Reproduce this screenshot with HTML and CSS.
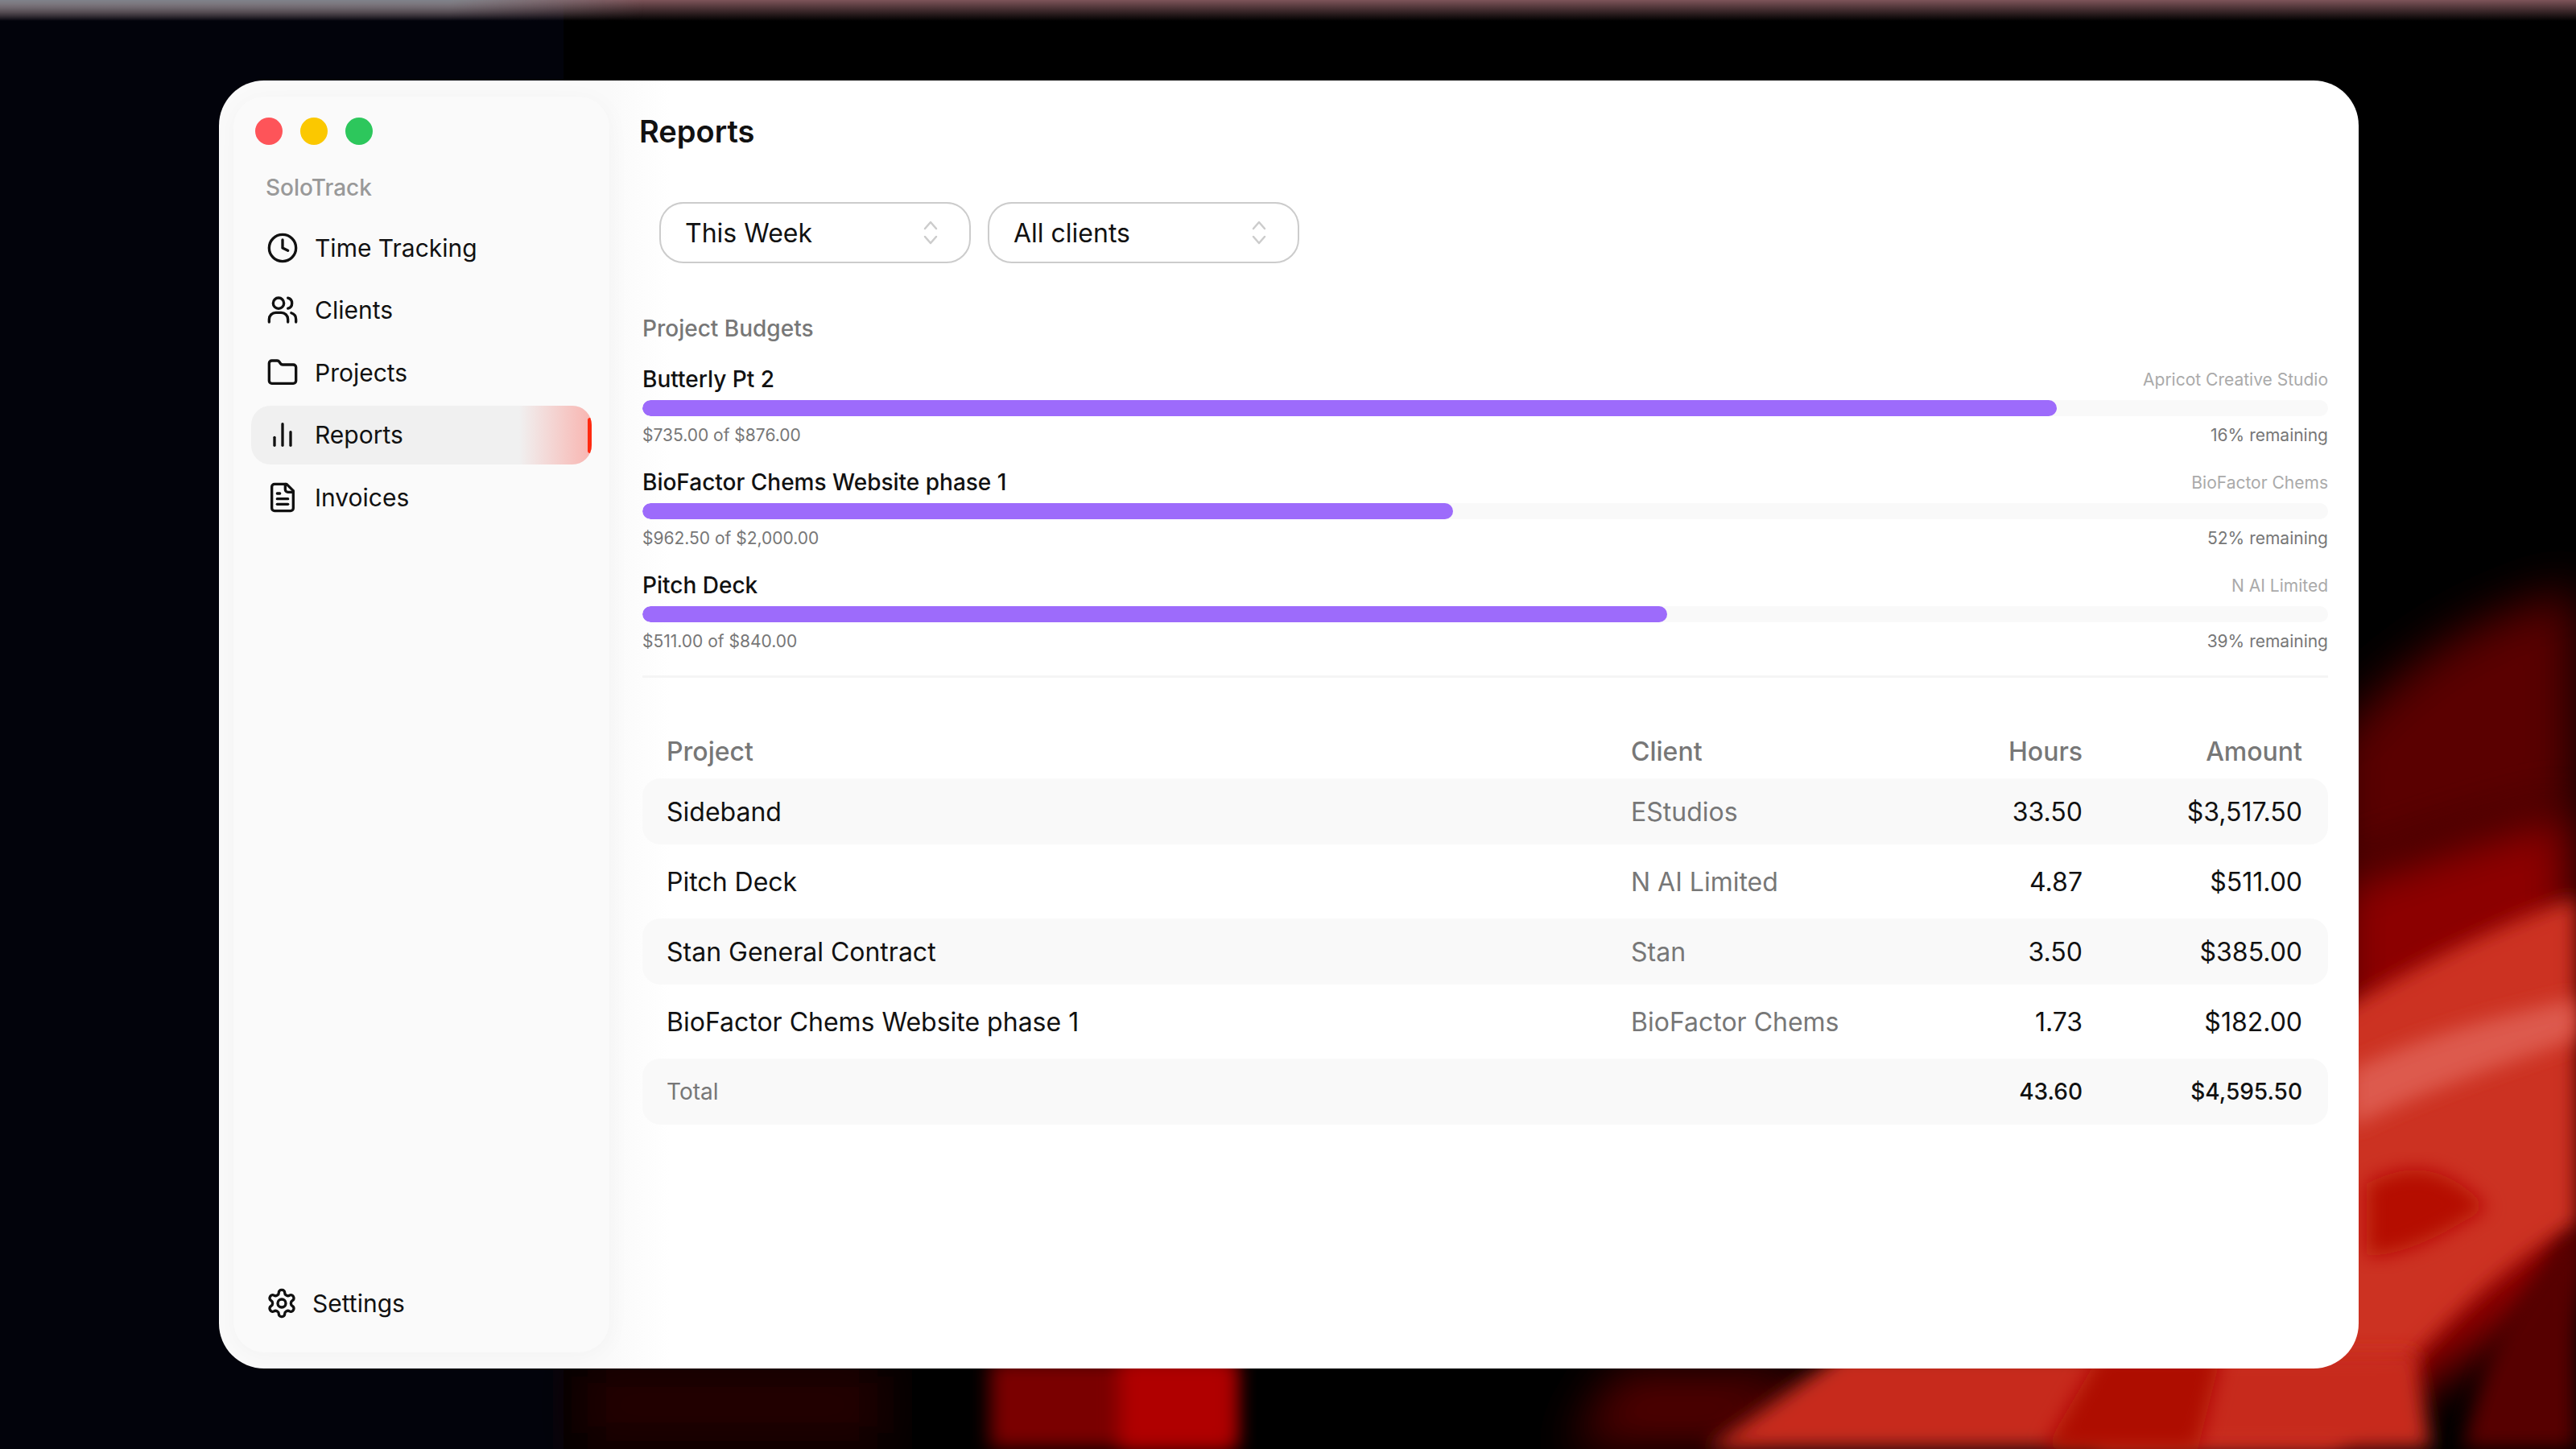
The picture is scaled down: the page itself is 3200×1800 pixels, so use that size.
FILE: index.html
```html
<!DOCTYPE html>
<html>
  <head>
    <title>SoloTrack - Reports</title>
    <link rel="stylesheet" href="styles.css">
  </head>
  <body>
    <svg class="wallpaper" viewBox="0 0 3200 1800" preserveAspectRatio="none">
      <defs>
        <filter id="blur-a" x="-20%" y="-20%" width="140%" height="140%"><feGaussianBlur stdDeviation="30"/></filter>
        <filter id="blur-b" x="-20%" y="-20%" width="140%" height="140%"><feGaussianBlur stdDeviation="12"/></filter>
        <linearGradient id="top-glow" x1="0" y1="0" x2="0" y2="1">
          <stop offset="0" stop-color="#7d5459"/>
          <stop offset="1" stop-color="#7d5459" stop-opacity="0"/>
        </linearGradient>
        <linearGradient id="top-grey" x1="0" y1="0" x2="1" y2="0">
          <stop offset="0" stop-color="#80838a"/>
          <stop offset="0.7" stop-color="#80838a"/>
          <stop offset="1" stop-color="#80838a" stop-opacity="0"/>
        </linearGradient>
      </defs>
      <rect width="3200" height="1800" fill="#000"/>
      <rect width="700" height="1800" fill="#02030b"/>
      <path d="M2900 920 C3000 800 3100 760 3200 730 V1000 C3100 1020 3000 1050 2900 1090 Z" fill="#5a0000" filter="url(#blur-a)"/>
      <path d="M2900 1090 C3000 1060 3100 1020 3200 1000 V1600 L2900 1800 Z" fill="#8c0000" filter="url(#blur-a)"/>
      <path d="M2900 1260 C3000 1200 3100 1150 3200 1115 V1520 C3080 1590 3000 1680 2900 1800 H2600 Z" fill="#cc3322" filter="url(#blur-b)"/>
      <path d="M2920 1330 C3020 1280 3120 1260 3200 1240 V1290 C3120 1320 3020 1350 2920 1400 Z" fill="#dd5a4e" filter="url(#blur-b)"/>
      <path d="M2940 1470 C3000 1440 3040 1450 3090 1500 C3040 1530 2990 1560 2940 1560 Z" fill="#b50a00" filter="url(#blur-b)"/>
      <path d="M3200 1530 V1800 H3060 C3080 1700 3130 1590 3200 1530 Z" fill="#560000" filter="url(#blur-b)"/>
      <path d="M1950 1800 L2010 1700 H2260 L2160 1800 Z" fill="#500000" filter="url(#blur-a)"/>
      <path d="M2120 1800 L2290 1680 H3000 L3020 1800 Z" fill="#c72c1a" filter="url(#blur-b)"/>
      <path d="M2540 1800 L2610 1680 H2760 L2730 1800 Z" fill="#ae0c00" filter="url(#blur-b)"/>
      <path d="M720 1800 V1690 H1100 V1800 Z" fill="#220000" filter="url(#blur-a)"/>
      <path d="M1230 1800 V1690 H1535 V1800 Z" fill="#7a0000" filter="url(#blur-b)"/>
      <path d="M1390 1800 V1690 H1534 V1800 Z" fill="#b00000" filter="url(#blur-b)"/>
      <rect y="0" width="3200" height="26" fill="url(#top-glow)"/>
      <rect y="0" width="800" height="26" fill="url(#top-grey)" style="mask: linear-gradient(#000, transparent)"/>
    </svg>

    <div class="window">
      <aside class="sidebar">
        <div class="traffic-lights">
          <span class="light light-red"></span>
          <span class="light light-yellow"></span>
          <span class="light light-green"></span>
        </div>
        <p class="app-name">SoloTrack</p>

        <nav class="nav">
          <a class="nav-item">
            <svg class="nav-icon" viewBox="0 0 24 24"><circle cx="12" cy="12" r="10"/><polyline points="12 6 12 12 16 14"/></svg>
            Time Tracking
          </a>
          <a class="nav-item">
            <svg class="nav-icon" viewBox="0 0 24 24"><path d="M2 21v-2a5 5 0 0 1 5-5h4a5 5 0 0 1 5 5v2"/><circle cx="9" cy="7" r="4"/><path d="M22 21v-2a5 5 0 0 0-3.5-4.75"/><path d="M16 3.13a4 4 0 0 1 0 7.75"/></svg>
            Clients
          </a>
          <a class="nav-item">
            <svg class="nav-icon" viewBox="0 0 24 24"><path d="M20 20a2 2 0 0 0 2-2V8a2 2 0 0 0-2-2h-7.9a2 2 0 0 1-1.69-.9L9.6 3.9A2 2 0 0 0 7.93 3H4a2 2 0 0 0-2 2v13a2 2 0 0 0 2 2Z"/></svg>
            Projects
          </a>
          <a class="nav-item nav-item-active">
            <svg class="nav-icon" viewBox="0 0 24 24"><path d="M18 20V10"/><path d="M12 20V4"/><path d="M6 20v-6"/></svg>
            Reports
            <span class="nav-marker"></span>
          </a>
          <a class="nav-item">
            <svg class="nav-icon" viewBox="0 0 24 24"><path d="M15 2H6a2 2 0 0 0-2 2v16a2 2 0 0 0 2 2h12a2 2 0 0 0 2-2V7Z"/><path d="M14 2v4a2 2 0 0 0 2 2h4"/><path d="M10 9H8"/><path d="M16 13H8"/><path d="M16 17H8"/></svg>
            Invoices
          </a>
        </nav>

        <a class="settings">
          <svg class="nav-icon" viewBox="0 0 24 24"><path d="M12.22 2h-.44a2 2 0 0 0-2 2v.18a2 2 0 0 1-1 1.73l-.43.25a2 2 0 0 1-2 0l-.15-.08a2 2 0 0 0-2.73.73l-.22.38a2 2 0 0 0 .73 2.73l.15.1a2 2 0 0 1 1 1.72v.51a2 2 0 0 1-1 1.74l-.15.09a2 2 0 0 0-.73 2.73l.22.38a2 2 0 0 0 2.73.73l.15-.08a2 2 0 0 1 2 0l.43.25a2 2 0 0 1 1 1.73V20a2 2 0 0 0 2 2h.44a2 2 0 0 0 2-2v-.18a2 2 0 0 1 1-1.73l.43-.25a2 2 0 0 1 2 0l.15.08a2 2 0 0 0 2.73-.73l.22-.39a2 2 0 0 0-.73-2.73l-.15-.08a2 2 0 0 1-1-1.74v-.5a2 2 0 0 1 1-1.74l.15-.09a2 2 0 0 0 .73-2.73l-.22-.38a2 2 0 0 0-2.73-.73l-.15.08a2 2 0 0 1-2 0l-.43-.25a2 2 0 0 1-1-1.73V4a2 2 0 0 0-2-2z"/><circle cx="12" cy="12" r="3"/></svg>
          Settings
        </a>
      </aside>

      <main class="main">
        <h1 class="page-title">Reports</h1>

        <div class="filters">
          <div class="select">
            This Week
            <svg class="select-arrows" viewBox="0 0 20 32"><path d="M3 11 10 3l7 8"/><path d="M3 21l7 8 7-8"/></svg>
          </div>
          <div class="select">
            All clients
            <svg class="select-arrows" viewBox="0 0 20 32"><path d="M3 11 10 3l7 8"/><path d="M3 21l7 8 7-8"/></svg>
          </div>
        </div>

        <p class="section-label">Project Budgets</p>

        <div class="budgets">
          <div class="budget">
            <div class="budget-row">
              <span class="budget-name">Butterly Pt 2</span>
              <span class="budget-client">Apricot Creative Studio</span>
            </div>
            <div class="bar"><div class="bar-fill" style="width: 83.9%"></div></div>
            <div class="budget-row budget-foot">
              <span>$735.00 of $876.00</span>
              <span>16% remaining</span>
            </div>
          </div>
          <div class="budget">
            <div class="budget-row">
              <span class="budget-name">BioFactor Chems Website phase 1</span>
              <span class="budget-client">BioFactor Chems</span>
            </div>
            <div class="bar"><div class="bar-fill" style="width: 48.1%"></div></div>
            <div class="budget-row budget-foot">
              <span>$962.50 of $2,000.00</span>
              <span>52% remaining</span>
            </div>
          </div>
          <div class="budget">
            <div class="budget-row">
              <span class="budget-name">Pitch Deck</span>
              <span class="budget-client">N AI Limited</span>
            </div>
            <div class="bar"><div class="bar-fill" style="width: 60.8%"></div></div>
            <div class="budget-row budget-foot">
              <span>$511.00 of $840.00</span>
              <span>39% remaining</span>
            </div>
          </div>
        </div>

        <div class="report">
          <div class="report-row report-head">
            <span>Project</span>
            <span>Client</span>
            <span class="num">Hours</span>
            <span class="num">Amount</span>
          </div>
          <div class="report-row report-striped">
            <span>Sideband</span>
            <span class="client">EStudios</span>
            <span class="num">33.50</span>
            <span class="num">$3,517.50</span>
          </div>
          <div class="report-row">
            <span>Pitch Deck</span>
            <span class="client">N AI Limited</span>
            <span class="num">4.87</span>
            <span class="num">$511.00</span>
          </div>
          <div class="report-row report-striped">
            <span>Stan General Contract</span>
            <span class="client">Stan</span>
            <span class="num">3.50</span>
            <span class="num">$385.00</span>
          </div>
          <div class="report-row">
            <span>BioFactor Chems Website phase 1</span>
            <span class="client">BioFactor Chems</span>
            <span class="num">1.73</span>
            <span class="num">$182.00</span>
          </div>
          <div class="report-row report-striped report-total">
            <span class="client">Total</span>
            <span></span>
            <span class="num">43.60</span>
            <span class="num">$4,595.50</span>
          </div>
        </div>
      </main>
    </div>
  </body>
</html>
```

FILE: styles.css
```css
* {
  box-sizing: border-box;
}

body {
  margin: 0;
  height: 1800px;
  padding: 100px 270px 100px 272px;
  overflow: hidden;
  background-color: #000;
  font-family: Inter, "Liberation Sans", sans-serif;
  color: #111;
}

.wallpaper {
  position: absolute;
  top: 0;
  left: 0;
  width: 3200px;
  height: 1800px;
}

.window {
  position: relative;
  display: flex;
  height: 1600px;
  padding: 20px 0 20px 18px;
  border-radius: 56px;
  background-color: #fff;
  background-image: linear-gradient(90deg, #fafafa 0, #fafafa 486px, #fff 560px);
}

/* sidebar */
.sidebar {
  display: flex;
  flex-direction: column;
  width: 467px;
  padding: 0 22px 41px 22px;
  border-radius: 38px;
  background-color: #fafafa;
  box-shadow: 0 4px 30px rgba(0, 0, 0, 0.035);
}

.traffic-lights {
  display: flex;
  gap: 22px;
  margin: 26px 0 0 5px;
}

.light {
  width: 34px;
  height: 34px;
  border-radius: 50%;
}

.light-red {
  background-color: #fe5459;
}

.light-yellow {
  background-color: #fbc800;
}

.light-green {
  background-color: #2dc75c;
}

.app-name {
  margin: 36px 0 0 18px;
  font-size: 28px;
  line-height: 34px;
  font-weight: 500;
  color: #999;
}

.nav {
  display: flex;
  flex-direction: column;
  gap: 4.6px;
  margin-top: 21px;
}

.nav-item {
  position: relative;
  display: flex;
  align-items: center;
  gap: 20px;
  height: 73px;
  padding-left: 19px;
  border-radius: 24px;
  font-size: 30px;
}

.nav-item-active {
  background-color: #f0f0f0;
  overflow: hidden;
}

.nav-item-active::after {
  content: "";
  position: absolute;
  top: 0;
  right: 0;
  bottom: 0;
  width: 90px;
  background-image: linear-gradient(90deg, rgba(250, 170, 165, 0), rgba(250, 170, 165, 0.85));
}

.nav-marker {
  position: absolute;
  top: 15px;
  right: 0;
  z-index: 1;
  width: 5px;
  height: 44px;
  border-radius: 3px 0 0 3px;
  background-color: #ff2a10;
}

.nav-icon {
  flex: none;
  width: 40px;
  height: 40px;
  fill: none;
  stroke: #111;
  stroke-width: 2;
  stroke-linecap: round;
  stroke-linejoin: round;
}

.settings {
  display: flex;
  align-items: center;
  gap: 18px;
  margin-top: auto;
  padding-left: 18px;
  font-size: 30px;
}

/* main */
.main {
  flex: 1;
  min-width: 0;
  padding: 0 38px 0 41px;
}

.page-title {
  margin: 20px 0 0 -4px;
  font-size: 38px;
  line-height: 46px;
  font-weight: 600;
}

.filters {
  display: flex;
  gap: 21px;
  margin: 65px 0 0 21px;
}

.select {
  display: flex;
  align-items: center;
  justify-content: space-between;
  width: 387px;
  height: 76px;
  padding: 0 38px 0 30px;
  border: 2.5px solid #ccc;
  border-radius: 30px;
  font-size: 32px;
}

.select-arrows {
  width: 20px;
  height: 32px;
  fill: none;
  stroke: #ccc;
  stroke-width: 2.5;
  stroke-linecap: round;
  stroke-linejoin: round;
}

.section-label {
  margin: 64px 0 0 0;
  font-size: 28px;
  line-height: 34px;
  font-weight: 500;
  color: #777;
}

.budgets {
  display: flex;
  flex-direction: column;
  gap: 29px;
  margin-top: 30px;
  padding-bottom: 29px;
  border-bottom: 3px solid #f5f5f5;
}

.budget-row {
  display: flex;
  align-items: center;
  justify-content: space-between;
  height: 32px;
}

.budget-name {
  font-size: 28px;
  font-weight: 500;
}

.budget-client {
  font-size: 21px;
  color: #aaa;
}

.bar {
  height: 20px;
  margin-top: 10px;
  border-radius: 10px;
  background-color: #f9f9f9;
  overflow: hidden;
}

.bar-fill {
  height: 100%;
  border-radius: 10px;
  background-color: #9d6bfb;
}

.budget-foot {
  height: 28px;
  margin-top: 9px;
  font-size: 21px;
  color: #777;
}

/* report table */
.report {
  display: flex;
  flex-direction: column;
  gap: 5px;
  margin-top: 62px;
}

.report-row {
  display: grid;
  grid-template-columns: 1198px 373px 188px 273px;
  align-items: center;
  height: 82px;
  padding: 0 30px;
  border-radius: 22px;
  font-size: 32px;
}

.report-head {
  height: 58px;
  font-weight: 500;
  color: #777;
}

.report-striped {
  background-color: #f9f9f9;
}

.report-total {
  font-size: 28px;
}

.report-total .num {
  font-weight: 500;
}

.client {
  color: #777;
}

.num {
  text-align: right;
}
```
